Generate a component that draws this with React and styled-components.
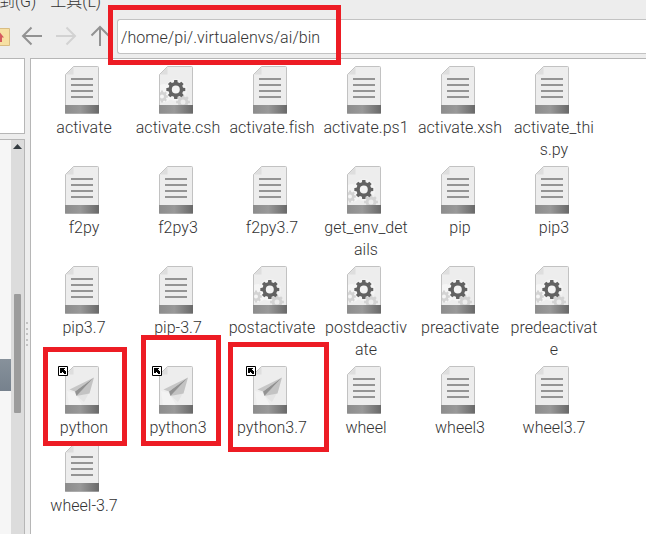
import React from "react";
import styled, { createGlobalStyle } from "styled-components";

const Global = createGlobalStyle`
  *, *::before, *::after { box-sizing: border-box; }
  body { margin: 0; font-family: Roboto, "Noto Sans CJK SC", sans-serif; font-weight: 300; color: #333; }
`;

const Window = styled.div`
  position: relative;
  width: 646px;
  height: 534px;
  overflow: hidden;
  background: #ededed;
  display: flex;
  flex-direction: column;
`;

const MenuBar = styled.div`
  display: flex;
  height: 14px;
  gap: 14px;
  margin-left: -1px;
  flex: none;
  align-items: flex-end;
`;

const MenuItem = styled.span`
  font-size: 16px;
  line-height: 25px;
  height: 25px;
  white-space: nowrap;
`;

const Toolbar = styled.div`
  display: flex;
  height: 44px;
  flex: none;
  align-items: flex-start;
`;

const ToolIcons = styled.svg`
  width: 117px;
  height: 44px;
  flex: none;
`;

const Address = styled.div`
  flex: 1;
  margin-top: 5px;
  height: 35px;
  padding-left: 3px;
  line-height: 35px;
  font-size: 16px;
  letter-spacing: 0.05px;
  background: #fff;
  border: 1px solid #c3c3c3;
  border-right: 0;
  border-radius: 3px 0 0 3px;
`;

const Body = styled.div`
  flex: 1;
  display: flex;
  min-height: 0;
`;

const Sidebar = styled.div`
  width: 25px;
  display: flex;
  flex-direction: column;
  gap: 5px;
`;

const Places = styled.div`
  height: 76px;
  flex: none;
  background: #fff;
  border: solid #b6b6b6;
  border-width: 1px 1px 1px 0;
`;

const Tree = styled.div`
  flex: 1;
  display: flex;
  background: #f6f6f6;
  border: solid #b6b6b6;
  border-width: 1px 1px 0 0;
`;

const TreeRows = styled.div`
  width: 11px;
  padding-top: 219px;
`;

const SelectedRow = styled.div`
  height: 32px;
  background: linear-gradient(#87919b, #76818d);
`;

const ScrollTrack = styled.div`
  width: 13px;
  background: #dcdcdc;
  display: flex;
  flex-direction: column;
  align-items: center;
`;

const ScrollArrow = styled.svg`
  width: 13px;
  height: 10px;
  flex: none;
`;

const ScrollThumb = styled.div`
  width: 7px;
  height: 119px;
  margin-top: 144px;
  border-radius: 1px;
  background: #9c9c9c;
`;

const Splitter = styled.div`
  width: 5px;
  display: flex;
  flex-direction: column;
  align-items: center;
  padding: 264px 1px 0 0;
  gap: 3.5px;
`;

const Grip = styled.div`
  width: 2px;
  height: 2px;
  background: #c2c2c2;
`;

const FilePane = styled.div`
  flex: 1;
  display: grid;
  grid-template-columns: repeat(6, 94px);
  align-content: start;
  padding: 7px 0 0 6px;
  background: #fff;
  border: solid #b6b6b6;
  border-width: 1px 0 0 1px;
`;

const File = styled.div`
  display: flex;
  flex-direction: column;
  align-items: center;
  padding-bottom: 5px;
`;

const FileIcon = styled.svg`
  width: 44px;
  height: 48px;
  margin-right: 14px;
  display: block;
  overflow: visible;
`;

const Label = styled.div`
  margin-top: 3px;
  font-size: 16px;
  line-height: 22px;
  letter-spacing: 0.03px;
  text-align: center;
  white-space: pre;
`;

const Highlight = styled.div`
  position: absolute;
  left: ${(p) => p.$x}px;
  top: ${(p) => p.$y}px;
  width: ${(p) => p.$w}px;
  height: ${(p) => p.$h}px;
  border: 5px solid #ed1c24;
`;

function gearPath(cx, cy, outer, inner, hole) {
  let d = "";
  for (let i = 0; i < 8; i++) {
    const a = (i * Math.PI) / 4;
    [[-0.25, inner], [-0.17, outer], [0.17, outer], [0.25, inner]].forEach(([o, r], j) => {
      const x = (cx + Math.sin(a + o) * r).toFixed(2);
      const y = (cy - Math.cos(a + o) * r).toFixed(2);
      d += `${i === 0 && j === 0 ? "M" : "L"}${x} ${y}`;
    });
  }
  return `${d}ZM${cx - hole} ${cy}a${hole} ${hole} 0 1 0 ${hole * 2} 0a${hole} ${hole} 0 1 0 ${-hole * 2} 0Z`;
}

// The page starts at x = 10 so that the link emblem can hang over its left edge.
function DocumentIcon({ kind }) {
  return (
    <FileIcon viewBox="0 0 44 48">
      <defs>
        <linearGradient id="foot">
          <stop offset="0" stopColor="#8c8c8c" />
          <stop offset="0.45" stopColor="#999" />
          <stop offset="1" stopColor="#696969" />
        </linearGradient>
        <clipPath id="page">
          <path d="M11 8V39H43V1H18Z" />
        </clipPath>
      </defs>
      <path d="M18.5.5H42.5Q43.5.5 43.5 1.5V47.5H10.5V8.5Z" fill="#ededed" stroke="#c2c2c2" />
      <path d="M18.5 1V8.5H11Z" fill="#dedede" />
      {kind === "script" && (
        <g fillRule="evenodd" clipPath="url(#page)">
          <circle cx="15" cy="27" r="9" fill="#f8f8f8" opacity="0.7" />
          <circle cx="27" cy="24" r="11" fill="#f6f6f6" opacity="0.6" />
          <path d={gearPath(13, 30.5, 6, 4.6, 2)} fill="#d3d3d3" />
          <path d={gearPath(34, 36, 7, 5.4, 2.5)} fill="#d3d3d3" />
          <path d={gearPath(26.8, 23.5, 9.6, 7.5, 4)} fill="#626262" />
        </g>
      )}
      {kind === "text" && (
        <path d="M16 13h22M16 19h22M16 25h22M16 31h22" stroke="#949494" strokeWidth="2" />
      )}
      {kind === "link" && (
        <g clipPath="url(#page)">
          <path d="M12 25L20 27L27 39H14Z" fill="#f3f3f3" />
          <path d="M22 30L34 27L29 36Z" fill="#e4e4e4" />
          <path d="M39 11.5L14.5 23.5L20 25.5Z" fill="#c6c6c6" />
          <path d="M39 11.5L21.5 30L34.5 27.5Z" fill="#c3c3c3" />
          <path d="M39 11.5L20 25.5L21.5 30Z" fill="#929292" />
        </g>
      )}
      <path d="M10 39H44V47.5H10Z" fill="url(#foot)" />
      {kind === "link" && (
        <g>
          <path d="M3.5.5h9v9h-9Z" fill="#fff" stroke="#000" />
          <path d="M5 2h5v1H9v1h1v1h1v3H9V7H8V6H7v1H5Z" fill="#000" />
        </g>
      )}
    </FileIcon>
  );
}

const files = [
  ["activate", "text"], ["activate.csh", "script"], ["activate.fish", "text"],
  ["activate.ps1", "text"], ["activate.xsh", "text"], ["activate_thi\ns.py", "text"],
  ["f2py", "text"], ["f2py3", "text"], ["f2py3.7", "text"],
  ["get_env_det\nails", "script"], ["pip", "text"], ["pip3", "text"],
  ["pip3.7", "text"], ["pip-3.7", "text"], ["postactivate", "script"],
  ["postdeactiv\nate", "script"], ["preactivate", "script"], ["predeactivat\ne", "script"],
  ["python", "link"], ["python3", "link"], ["python3.7", "link"],
  ["wheel", "text"], ["wheel3", "text"], ["wheel3.7", "text"],
  ["wheel-3.7", "text"],
];

export default function App() {
  return (
    <Window>
      <Global />
      <MenuBar>
        <MenuItem>到(G)</MenuItem>
        <MenuItem>工具(L)</MenuItem>
      </MenuBar>
      <Toolbar>
        <ToolIcons viewBox="0 14 117 44" fill="none">
          <path d="M-5 28.5H9.5V45.5H-5Z" fill="#f7e0a3" stroke="#d9bd83" />
          <path d="M0 32.5L4 37.5H2V42H0Z" fill="#d65a5e" />
          <path d="M42 36H23M31.5 27.5L23 36L31.5 44.5" stroke="#929292" strokeWidth="2" />
          <path d="M56 36H75M66.5 27.5L75 36L66.5 44.5" stroke="#d2d2d2" strokeWidth="2" />
          <path d="M100 46V27M91.5 35.5L100 27L108.5 35.5" stroke="#929292" strokeWidth="2" />
        </ToolIcons>
        <Address>/home/pi/.virtualenvs/ai/bin</Address>
      </Toolbar>
      <Body>
        <Sidebar>
          <Places />
          <Tree>
            <TreeRows><SelectedRow /></TreeRows>
            <ScrollTrack>
              <ScrollArrow viewBox="0 0 13 10"><path d="M2 9L6.5 4L11 9Z" fill="#333b40" /></ScrollArrow>
              <ScrollThumb />
            </ScrollTrack>
          </Tree>
        </Sidebar>
        <Splitter>
          <Grip /><Grip /><Grip /><Grip /><Grip />
        </Splitter>
        <FilePane>
          {files.map(([name, kind]) => (
            <File key={name}>
              <DocumentIcon kind={kind} />
              <Label>{name}</Label>
            </File>
          ))}
        </FilePane>
      </Body>
      <Highlight $x={108} $y={5} $w={233} $h={60} />
      <Highlight $x={43} $y={347} $w={84} $h={99} />
      <Highlight $x={141} $y={335} $w={80} $h={111} />
      <Highlight $x={228} $y={342} $w={101} $h={110} />
    </Window>
  );
}
